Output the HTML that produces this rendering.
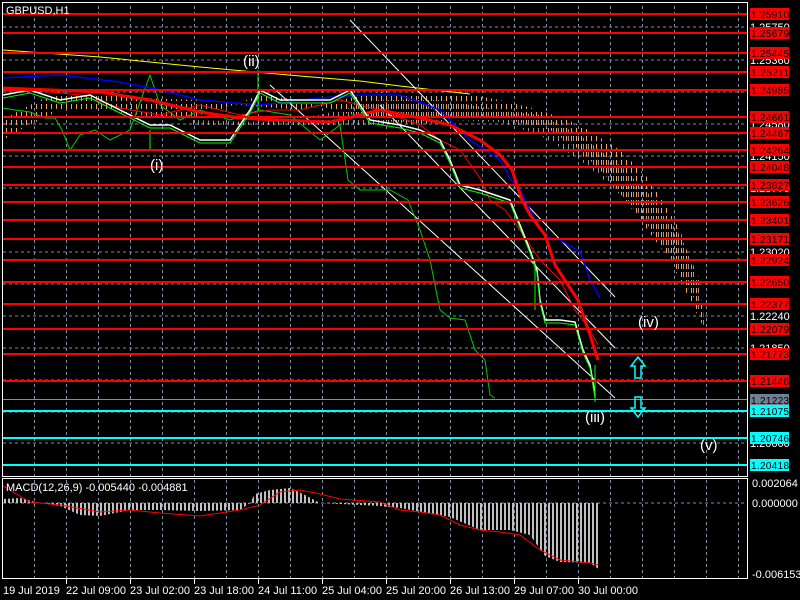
<!DOCTYPE html>
<html><head><meta charset="utf-8"><style>
html,body{margin:0;padding:0;background:#000;width:800px;height:600px;overflow:hidden}
svg{display:block}
text{font-family:"Liberation Sans",sans-serif;font-size:11px;fill:#fff}
.pl rect{fill:#f00}
.pl text{fill:#000;font-size:10px}
</style></head><body>
<svg width="800" height="600" viewBox="0 0 800 600">
<defs>
<pattern id="vg" x="2" y="0" width="32" height="600" patternUnits="userSpaceOnUse">
<line x1="0.5" y1="0" x2="0.5" y2="600" stroke="#7f8ea0" stroke-dasharray="3,3"/>
</pattern>
<pattern id="hist" x="0" y="0" width="4" height="10" patternUnits="userSpaceOnUse">
<rect x="0" y="0" width="2" height="10" fill="#c0c0c0"/>
</pattern>
<pattern id="cl" x="0" y="0" width="5" height="8" patternUnits="userSpaceOnUse">
<rect x="1" y="0" width="1" height="5" fill="#f4a460"/>
</pattern>
<pattern id="cw" x="2" y="0" width="5" height="8" patternUnits="userSpaceOnUse">
<rect x="1" y="0" width="1" height="5" fill="#e0d0e0"/>
</pattern>
<clipPath id="main"><rect x="3" y="3" width="744" height="473"/></clipPath>
<clipPath id="mac"><rect x="3" y="479" width="744" height="100"/></clipPath>
</defs>
<rect x="3" y="3" width="744" height="473" fill="url(#vg)"/>
<rect x="3" y="479" width="744" height="100" fill="url(#vg)"/>
<g stroke="#7f8ea0" stroke-dasharray="3,3">
<line x1="3" y1="27" x2="747" y2="27"/><line x1="3" y1="60" x2="747" y2="60"/>
<line x1="3" y1="92" x2="747" y2="92"/><line x1="3" y1="124" x2="747" y2="124"/>
<line x1="3" y1="156" x2="747" y2="156"/><line x1="3" y1="188" x2="747" y2="188"/>
<line x1="3" y1="220" x2="747" y2="220"/><line x1="3" y1="252" x2="747" y2="252"/>
<line x1="3" y1="284" x2="747" y2="284"/><line x1="3" y1="316" x2="747" y2="316"/>
<line x1="3" y1="348" x2="747" y2="348"/><line x1="3" y1="380" x2="747" y2="380"/>
<line x1="3" y1="412" x2="747" y2="412"/><line x1="3" y1="443" x2="747" y2="443"/>
<line x1="3" y1="503" x2="747" y2="503"/>
</g>
<g clip-path="url(#main)">
<polygon fill="url(#cl)" points="3,120 20,110 40,100 60,95 100,92 140,98 200,100 240,105 300,110 340,100 380,92 420,95 460,93 500,100 540,110 580,125 620,150 650,180 680,230 700,290 705,330 690,300 670,260 640,220 610,180 580,150 550,130 510,120 460,118 420,125 380,120 340,112 300,100 260,95 220,110 180,120 140,115 100,110 60,110 20,130 3,140"/>
<polygon fill="url(#cw)" opacity="0.7" points="190,120 260,122 320,115 380,100 440,100 500,110 540,115 580,135 620,165 650,195 680,235 700,280 705,330 695,300 670,255 640,215 610,185 580,160 540,135 500,122 450,120 400,122 350,128 300,128 250,128 190,128"/>
<polyline fill="none" stroke="#ff0" points="3,50 100,57 200,67 300,76 360,81 400,86 470,94"/>
<g stroke="#fff" stroke-width="1" fill="none">
<line x1="350" y1="20" x2="615" y2="297"/>
<line x1="380" y1="105" x2="615" y2="348"/>
<line x1="270" y1="85" x2="615" y2="398"/>
</g>
<polyline fill="none" stroke="#0c0" points="3,108 15,110 30,112 45,118 55,118 62,130 70,150 80,135 95,130 110,140 130,130 150,75 160,105 180,120 200,110 230,120 260,110 290,115 320,140 340,125 348,180 360,190 390,190 408,200 420,230 430,260 440,310 450,318 465,320 475,350 485,360 490,395 495,398"/>
<polyline fill="none" stroke="#00f" stroke-width="1.5" points="3,78 60,75 120,82 160,90 200,100 260,105 320,98 360,95 400,95 440,110 470,140 485,150 500,160 510,178 520,190 535,220 545,236 560,240 580,252 590,280 600,298"/>
<polyline fill="none" stroke="#f00" points="3,88 50,92 80,95 120,108 160,115 200,105 240,115 270,110 300,110 340,100 380,110 420,125 440,140 460,150 480,178 490,200 505,210 520,230 540,260 560,280 575,310 590,330 598,345"/>
<polyline fill="none" stroke="#f00" stroke-width="3" points="3,88 100,92 150,100 200,112 240,118 280,120 330,122 380,110 420,118 450,125 480,140 500,155 512,170 522,200 530,215 545,235 555,265 568,285 578,300 590,335 598,360"/>
<polyline fill="none" stroke="#fff" stroke-width="1.5" points="3,95 30,90 60,100 90,95 120,110 150,125 170,125 200,140 230,140 250,110 260,90 280,100 300,100 330,100 350,90 370,120 400,125 420,130 440,140 450,160 460,185 480,190 495,195 510,200 520,225 530,250 537,270 540,300 545,320 560,320 575,322 583,350 590,365 595,395"/>
<polyline fill="none" stroke="#0f0" stroke-width="1" points="3,98 30,93 60,103 90,98 120,113 150,128 170,128 200,143 230,143 250,113 260,93 280,103 300,103 330,103 350,93 370,123 400,128 420,133 440,143 450,163 460,188 480,193 495,198 510,203 520,228 530,253 537,273 540,303 545,323 560,323 575,325 583,353 590,368 595,398"/>
<g stroke="#0f0"><line x1="258" y1="70" x2="258" y2="110"/><line x1="150" y1="130" x2="150" y2="150"/>
<line x1="535" y1="260" x2="535" y2="310"/><line x1="595" y1="365" x2="595" y2="402"/></g>
</g>
<g stroke="#f00" stroke-width="2">
<line x1="3" y1="14" x2="747" y2="14"/><line x1="3" y1="33" x2="747" y2="33"/>
<line x1="3" y1="53" x2="747" y2="53"/><line x1="3" y1="72" x2="747" y2="72"/>
<line x1="3" y1="90" x2="747" y2="90"/><line x1="3" y1="117" x2="747" y2="117"/>
<line x1="3" y1="133" x2="747" y2="133"/><line x1="3" y1="150" x2="747" y2="150"/>
<line x1="3" y1="167" x2="747" y2="167"/><line x1="3" y1="185" x2="747" y2="185"/>
<line x1="3" y1="202" x2="747" y2="202"/><line x1="3" y1="220" x2="747" y2="220"/>
<line x1="3" y1="239" x2="747" y2="239"/><line x1="3" y1="260" x2="747" y2="260"/>
<line x1="3" y1="282" x2="747" y2="282"/><line x1="3" y1="304" x2="747" y2="304"/>
<line x1="3" y1="329" x2="747" y2="329"/><line x1="3" y1="354" x2="747" y2="354"/>
<line x1="3" y1="381" x2="747" y2="381"/>
</g>
<line x1="3" y1="399.5" x2="747" y2="399.5" stroke="#8090a0"/>
<g stroke="#0ff" stroke-width="2">
<line x1="3" y1="411" x2="747" y2="411"/><line x1="3" y1="438" x2="747" y2="438"/>
<line x1="3" y1="465" x2="747" y2="465"/>
</g>
<path d="M638,357 L645,366 L641,366 L641,378 L635,378 L635,366 L631,366 Z" fill="none" stroke="#0ff" stroke-width="1.5"/>
<path d="M635,397 L641,397 L641,408 L645,408 L638,417 L631,408 L635,408 Z" fill="none" stroke="#0ff" stroke-width="1.5"/>
<text x="150" y="170" style="font-size:15px">(i)</text>
<text x="243" y="66" style="font-size:15px">(ii)</text>
<text x="585" y="422" style="font-size:15px">(iii)</text>
<text x="638" y="327" style="font-size:15px">(iv)</text>
<text x="700" y="450" style="font-size:15px">(v)</text>
<text x="6" y="14">GBPUSD,H1</text>
<g clip-path="url(#mac)">
<polygon fill="url(#hist)" points="2,503 2,499 20,498 40,503 60,506 80,515 100,516 130,510 160,510 200,511 240,510 250,503 255,494 270,490 290,488 305,495 320,503 380,506 400,508 450,517 480,530 510,530 530,535 545,556 560,562 590,563 600,570 600,503"/>
<polyline fill="none" stroke="#f00" stroke-width="1" points="3,486 30,502 60,505 100,512 130,510 160,513 200,516 240,510 260,505 280,492 300,490 320,494 340,499 380,502 400,510 420,512 440,515 460,525 480,530 500,532 520,535 540,550 560,560 590,563 598,565"/>
</g>
<text x="6" y="491">MACD(12,26,9) -0.005440 -0.004881</text>
<g fill="none" stroke="#fff" stroke-width="1">
<rect x="2.5" y="2.5" width="745" height="474"/>
<rect x="2.5" y="478.5" width="745" height="100"/>
</g>
<g>
<text x="750" y="31">1.25750</text><text x="750" y="64">1.25360</text>
<text x="750" y="128">1.24580</text><text x="750" y="160">1.24150</text>
<text x="750" y="192">1.23770</text><text x="750" y="256">1.23020</text>
<text x="750" y="320">1.22240</text><text x="750" y="352">1.21850</text>
<text x="750" y="447">1.20660</text>
<text x="752" y="487">0.002064</text><text x="752" y="507">0.000000</text>
<text x="752" y="578">-0.006153</text>
</g>
<g class="pl">
<rect x="750" y="8" width="39" height="12"/><text x="751" y="18" textLength="38">1.25910</text>
<rect x="750" y="27" width="39" height="12"/><text x="751" y="37" textLength="38">1.25679</text>
<rect x="750" y="47" width="39" height="12"/><text x="751" y="57" textLength="38">1.25445</text>
<rect x="750" y="66" width="39" height="12"/><text x="751" y="76" textLength="38">1.25211</text>
<rect x="750" y="84" width="39" height="12"/><text x="751" y="94" textLength="38">1.24985</text>
<rect x="750" y="111" width="39" height="12"/><text x="751" y="121" textLength="38">1.24661</text>
<rect x="750" y="127" width="39" height="12"/><text x="751" y="137" textLength="38">1.24467</text>
<rect x="750" y="144" width="39" height="12"/><text x="751" y="154" textLength="38">1.24264</text>
<rect x="750" y="161" width="39" height="12"/><text x="751" y="171" textLength="38">1.24048</text>
<rect x="750" y="179" width="39" height="12"/><text x="751" y="189" textLength="38">1.23827</text>
<rect x="750" y="196" width="39" height="12"/><text x="751" y="206" textLength="38">1.23626</text>
<rect x="750" y="214" width="39" height="12"/><text x="751" y="224" textLength="38">1.23401</text>
<rect x="750" y="233" width="39" height="12"/><text x="751" y="243" textLength="38">1.23171</text>
<rect x="750" y="254" width="39" height="12"/><text x="751" y="264" textLength="38">1.22924</text>
<rect x="750" y="276" width="39" height="12"/><text x="751" y="286" textLength="38">1.22650</text>
<rect x="750" y="298" width="39" height="12"/><text x="751" y="308" textLength="38">1.22377</text>
<rect x="750" y="323" width="39" height="12"/><text x="751" y="333" textLength="38">1.22079</text>
<rect x="750" y="348" width="39" height="12"/><text x="751" y="358" textLength="38">1.21773</text>
<rect x="750" y="375" width="39" height="12"/><text x="751" y="385" textLength="38">1.21448</text>
<rect x="750" y="394" width="39" height="12" style="fill:#708090"/><text x="751" y="404" textLength="38">1.21223</text>
<rect x="750" y="405" width="39" height="12" style="fill:#0ff"/><text x="751" y="415" textLength="38">1.21075</text>
<rect x="750" y="432" width="39" height="12" style="fill:#0ff"/><text x="751" y="442" textLength="38">1.20746</text>
<rect x="750" y="459" width="39" height="12" style="fill:#0ff"/><text x="751" y="469" textLength="38">1.20418</text>
</g>
<g stroke="#fff"><line x1="66.5" y1="579" x2="66.5" y2="584"/><line x1="130.5" y1="579" x2="130.5" y2="584"/><line x1="194.5" y1="579" x2="194.5" y2="584"/><line x1="258.5" y1="579" x2="258.5" y2="584"/><line x1="322.5" y1="579" x2="322.5" y2="584"/><line x1="386.5" y1="579" x2="386.5" y2="584"/><line x1="450.5" y1="579" x2="450.5" y2="584"/><line x1="514.5" y1="579" x2="514.5" y2="584"/><line x1="578.5" y1="579" x2="578.5" y2="584"/></g>
<g>
<text x="3" y="594">19 Jul 2019</text>
<text x="66" y="594">22 Jul 09:00</text>
<text x="130" y="594">23 Jul 02:00</text>
<text x="194" y="594">23 Jul 18:00</text>
<text x="258" y="594">24 Jul 11:00</text>
<text x="322" y="594">25 Jul 04:00</text>
<text x="386" y="594">25 Jul 20:00</text>
<text x="450" y="594">26 Jul 13:00</text>
<text x="514" y="594">29 Jul 07:00</text>
<text x="578" y="594">30 Jul 00:00</text>
</g>
</svg>
</body></html>
